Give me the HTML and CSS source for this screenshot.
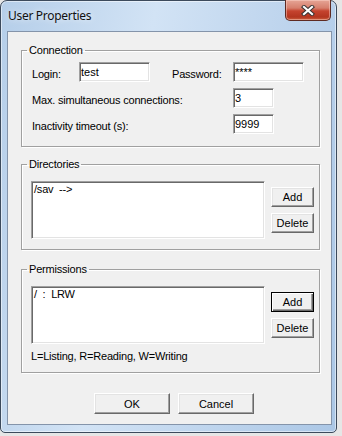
FILE: index.html
```html
<!DOCTYPE html>
<html lang="en">
<head>
    <meta charset="UTF-8">
    <title>User Properties</title>
    <link rel="stylesheet" href="styles.css">
</head>
<body>
    <div class="window">
        <div class="titlebar">
            <span class="title">User Properties</span>
            <button class="close" title="Close">
                <svg width="14" height="11" viewBox="0 0 14 11">
                    <path d="M3 2 L11 9 M11 2 L3 9" stroke="#3a3434" stroke-width="4.2" stroke-linecap="square" fill="none"/>
                    <path d="M3 2 L11 9 M11 2 L3 9" stroke="#fff" stroke-width="2.2" stroke-linecap="square" fill="none"/>
                </svg>
            </button>
        </div>

        <div class="client">
            <fieldset class="group connection">
                <legend>Connection</legend>
                <div class="group-body">
                    <div class="row">
                        <label class="lbl lbl-login">Login:</label>
                        <input class="field field-name" type="text" value="test">
                        <label class="lbl lbl-pass">Password:</label>
                        <input class="field field-name" type="text" value="****">
                    </div>
                    <div class="row">
                        <label class="lbl lbl-wide">Max. simultaneous connections:</label>
                        <input class="field field-num" type="text" value="3">
                    </div>
                    <div class="row row-last">
                        <label class="lbl lbl-wide">Inactivity timeout (s):</label>
                        <input class="field field-num" type="text" value="9999">
                    </div>
                </div>
            </fieldset>

            <fieldset class="group directories">
                <legend>Directories</legend>
                <div class="group-body list-body">
                    <div class="list-row">
                        <div class="listbox">/sav  --&gt;</div>
                        <div class="side-buttons">
                            <button class="btn btn-small">Add</button>
                            <button class="btn btn-small">Delete</button>
                        </div>
                    </div>
                </div>
            </fieldset>

            <fieldset class="group permissions">
                <legend>Permissions</legend>
                <div class="group-body list-body">
                    <div class="list-row">
                        <div class="listbox">/  :  LRW</div>
                        <div class="side-buttons">
                            <button class="btn btn-small btn-default">Add</button>
                            <button class="btn btn-small">Delete</button>
                        </div>
                    </div>
                    <div class="note">L=Listing, R=Reading, W=Writing</div>
                </div>
            </fieldset>

            <div class="dialog-buttons">
                <button class="btn btn-wide">OK</button>
                <button class="btn btn-wide">Cancel</button>
            </div>
        </div>
    </div>
</body>
</html>
```

FILE: styles.css
```css
* {
    box-sizing: border-box;
}
body {
    margin: 0;
    background: #e6e6e6;
    font-family: "Liberation Sans", Arial, sans-serif;
    font-size: 11px;
    letter-spacing: -0.2px;
    color: #000;
}
.window {
    width: 337px;
    height: 433px;
    display: flex;
    flex-direction: column;
    padding: 0 4px 7px 6px;
    border: 1px solid #3c4a5c;
    border-radius: 7px 7px 5px 5px;
    background: linear-gradient(100deg, #b5cee9 0%, #d2e3f5 38%, #c3d8ef 62%, #abc7e6 100%);
    box-shadow: inset 0 0 0 1px rgba(255,255,255,0.5);
}
.titlebar {
    height: 30px;
    display: flex;
    align-items: flex-start;
}
.title {
    flex: 1;
    padding: 7px 0 0 1px;
    font-family: "Noto Sans", "Open Sans", sans-serif;
    font-size: 12px;
    letter-spacing: -0.3px;
    line-height: 16px;
    color: #111;
    text-shadow: 0 0 6px rgba(255,255,255,0.9);
}
.close {
    width: 46px;
    height: 21px;
    margin: -1px 1px 0 0;
    padding: 0;
    display: flex;
    align-items: center;
    justify-content: center;
    border: 1px solid #5e2a22;
    border-top: none;
    border-radius: 0 0 5px 5px;
    background: linear-gradient(to bottom, #e6a596 0%, #d67f6d 40%, #c5432e 55%, #b3351f 85%, #cc6040 100%);
    box-shadow: inset 0 0 0 1px rgba(255,220,210,0.45);
}
.client {
    flex: 1;
    display: flex;
    flex-direction: column;
    padding: 0 11px 0 13px;
    background: #f0f0f0;
    border: 1px solid #8494aa;
}

/* group boxes */
.group {
    margin: 0;
    padding: 0;
    border: 1px solid #a0a0a0;
    box-shadow: inset 1px 1px 0 #fff, 1px 1px 0 #fff;
    min-width: 0;
}
.group legend {
    margin-left: 5px;
    padding: 0 2px;
    line-height: 13px;
}
.connection {
    margin-top: 12px;
}
.directories {
    margin-top: 11px;
}
.permissions {
    margin-top: 13px;
}
.group-body {
    padding: 5px 0 12px 10px;
}
.list-body {
    padding: 10px 0 10px 9px;
}
.permissions .list-body {
    padding-bottom: 9px;
}

/* connection rows */
.row {
    display: flex;
    align-items: flex-start;
    height: 20px;
    margin-bottom: 6px;
}
.row + .row-last {
    margin-top: 1px;
    margin-bottom: 0;
}
.lbl {
    padding-top: 6px;
    line-height: 13px;
}
.lbl-login {
    width: 47px;
}
.lbl-pass {
    width: 61px;
    margin-left: 22px;
}
.lbl-wide {
    width: 201px;
}
.field {
    height: 20px;
    margin: 0;
    padding: 0 0 0 1px;
    font: inherit;
    line-height: 13px;
    color: #000;
    background: #fff;
    border: 1px solid;
    border-color: #a0a0a0 #fff #fff #a0a0a0;
    box-shadow: inset 1px 1px 0 #696969, inset -1px -1px 0 #e3e3e3;
    outline: none;
}
.field-name {
    width: 71px;
}
.field-num {
    width: 41px;
}

/* list groups */
.list-row {
    display: flex;
    gap: 6px;
}
.listbox {
    width: 234px;
    height: 58px;
    padding: 1px 0 0 2px;
    line-height: 13px;
    white-space: pre;
    background: #fff;
    border: 1px solid;
    border-color: #a0a0a0 #fff #fff #a0a0a0;
    box-shadow: inset 1px 1px 0 #696969, inset -1px -1px 0 #e3e3e3;
}
.side-buttons {
    display: flex;
    flex-direction: column;
    gap: 6px;
    padding-top: 6px;
}
.note {
    margin-top: 6px;
    line-height: 13px;
}

/* buttons */
.btn {
    margin: 0;
    padding: 0;
    font: inherit;
    color: #000;
    background: #f0f0f0;
    border: 1px solid;
    border-color: #fff #696969 #696969 #fff;
    box-shadow: inset -1px -1px 0 #a0a0a0, inset 1px 1px 0 #e3e3e3;
}
.btn-default {
    border-color: #000;
    box-shadow: inset 1px 1px 0 #fff, inset -1px -1px 0 #696969, inset -2px -2px 0 #a0a0a0;
}
.btn-small {
    width: 43px;
    height: 20px;
}
.dialog-buttons {
    display: flex;
    gap: 8px;
    margin-top: 20px;
    padding-left: 73px;
}
.btn-wide {
    width: 76px;
    height: 21px;
}
```
